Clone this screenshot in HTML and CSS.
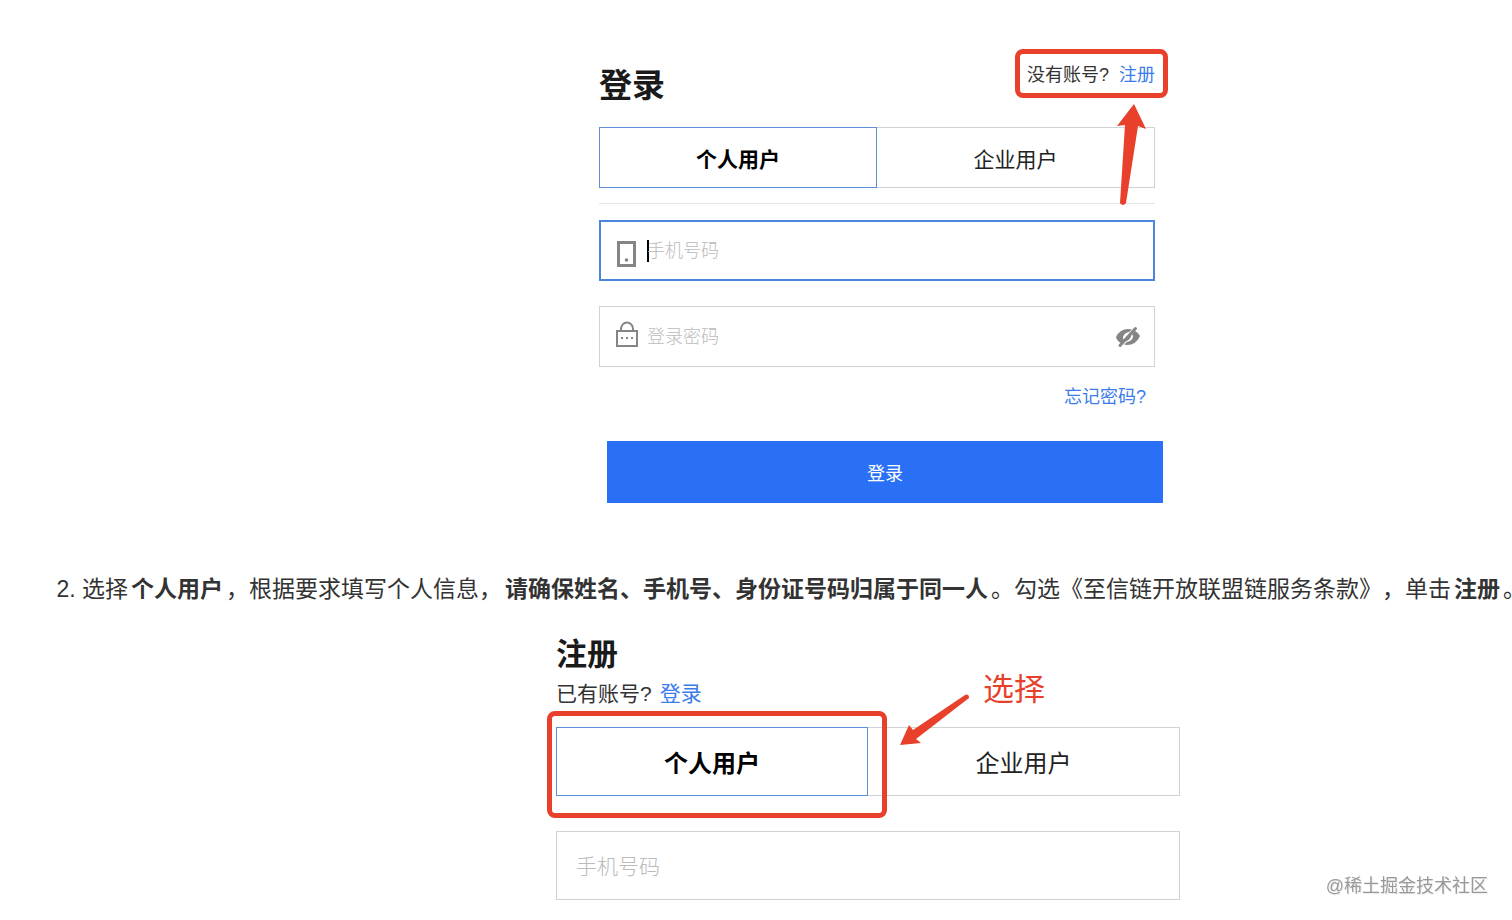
FILE: index.html
```html
<!DOCTYPE html>
<html lang="zh-CN">

<head>
    <meta charset="UTF-8">
    <meta name="viewport" content="width=device-width, initial-scale=1.0">
    <title>注册账号</title>
    <link rel="stylesheet" href="styles.css">
</head>

<body>
    <article>
        <section class="shot shot-login" id="login">
            <form class="panel login">
                <header class="login-head">
                    <h2>登录</h2>
                    <p class="switch">没有账号?<a href="#register">注册</a>
                        <span class="mark mark-link"></span>
                        <svg class="arrow arrow-up" width="32" height="104" viewBox="0 0 32 104">
                            <path d="M18 2 L30 27 L22 24 L10 101 Q7 105 4 101 L9 23 L1 24 Z" />
                        </svg>
                    </p>
                </header>
                <div class="tabs">
                    <button type="button" class="active">个人用户</button>
                    <button type="button">企业用户</button>
                </div>
                <hr>
                <div class="field focused">
                    <svg class="icon icon-phone" width="22" height="26" viewBox="0 0 22 26">
                        <rect x="2.500" y="1.500" width="16" height="23" fill="none" stroke="#858585" stroke-width="3" />
                        <circle cx="10.500" cy="19" r="1.800" fill="#858585" />
                    </svg>
                    <span class="caret"></span>
                    <input type="text" placeholder="手机号码" aria-label="手机号码">
                </div>
                <div class="field">
                    <svg class="icon icon-lock" width="22" height="26" viewBox="0 0 22 26">
                        <path d="M5 10 V8 a6 6.500 0 0 1 12 0 V10" fill="none" stroke="#858585" stroke-width="2" />
                        <rect x="1" y="10" width="20" height="15" fill="none" stroke="#858585" stroke-width="2" />
                        <path d="M5 17h2M10 17h2M15 17h2" stroke="#858585" stroke-width="2" />
                    </svg>
                    <input type="password" placeholder="登录密码" aria-label="登录密码">
                    <button type="button" class="eye" aria-label="显示密码">
                        <svg width="26" height="22" viewBox="0 0 26 22">
                            <path d="M1 11 Q5 3 13 3 L17 3.500 L14 6 Q9 7 8 11 Q8 13 9 14 L6 17 Q2 15 1 11 Z M25 10 Q21 19 12 19 L9 18.500 L12 16 Q17 15 18 11 Q18 9 17 8 L20 5 Q24 7 25 10 Z" fill="#858585" />
                            <path d="M15.500 8 Q15 13 10.500 14.500" fill="none" stroke="#858585" stroke-width="2" />
                            <path d="M5 19.500 L20.500 2.500" stroke="#858585" stroke-width="3" stroke-linecap="round" />
                        </svg>
                    </button>
                </div>
                <p class="forgot"><a href="#forgot">忘记密码?</a></p>
                <button type="submit" class="submit">登录</button>
            </form>
        </section>

        <ol start="2">
            <li>选择<strong>个人用户</strong>，根据要求填写个人信息，<strong>请确保姓名、手机号、身份证号码归属于同一人</strong>。勾选《至信链开放联盟链服务条款》，单击<strong>注册</strong>。</li>
        </ol>

        <section class="shot shot-register" id="register">
            <form class="panel register">
                <h2>注册</h2>
                <p class="switch">已有账号?<a href="#login">登录</a></p>
                <div class="tabs">
                    <button type="button" class="active">个人用户</button>
                    <button type="button">企业用户</button>
                    <span class="mark mark-tab"></span>
                    <svg class="arrow arrow-left" width="72" height="54" viewBox="0 0 72 54">
                        <path d="M1 52 L10 32 L14 37 L66 2 Q70 0 70 5 L17 46 L22 50 Z" />
                    </svg>
                    <span class="note">选择</span>
                </div>
                <div class="field">
                    <input type="text" placeholder="手机号码" aria-label="注册手机号码">
                </div>
            </form>
        </section>
    </article>

    <div class="watermark">@稀土掘金技术社区</div>
</body>

</html>
```
FILE: styles.css
```css
* {
    box-sizing: border-box;
}

body {
    margin: 0;
    background-color: #fff;
    color: #333;
    font-family: "Liberation Sans", "Noto Sans CJK SC", sans-serif;
    text-spacing-trim: space-all;
    overflow-x: hidden;
}

h2,
p {
    margin: 0;
}

h2 {
    color: #1a1a1a;
    font-weight: bold;
}

a {
    color: #3b7cec;
    text-decoration: none;
}

button,
input {
    font-family: inherit;
    font-size: inherit;
}

.shot {
    display: flex;
    justify-content: center;
}

.shot-login {
    padding: 62px 0 0 242px;
}

.shot-register {
    padding: 28px 0 20px 224px;
}

.panel {
    width: 100%;
}

.login {
    max-width: 556px;
    font-size: 18px;
}

.register {
    max-width: 624px;
    font-size: 21px;
}

.login-head {
    display: flex;
    justify-content: space-between;
    align-items: flex-start;
    margin-bottom: 17px;
}

.login h2 {
    font-size: 33px;
    line-height: 48px;
}

.register h2 {
    font-size: 31px;
    line-height: 40px;
}

.switch {
    position: relative;
    z-index: 1;
    line-height: 26px;
}

.switch a {
    margin-left: 10px;
}

.register .switch {
    margin: 4px 0 18px;
    line-height: 30px;
}

.register .switch a {
    margin-left: 8px;
}

/* tabs */
.tabs {
    position: relative;
    display: flex;
}

.tabs button {
    flex: 1 1 50%;
    height: 61px;
    padding: 0;
    background: none;
    border: 1px solid #d0d3d6;
    border-left: none;
    color: #222;
    font-size: 21px;
    cursor: pointer;
}

.tabs .active {
    border: 1px solid #5f8fd8;
    color: #000;
    font-weight: bold;
}

.register .tabs {
    margin-bottom: 35px;
}

.register .tabs button {
    height: 69px;
    font-size: 24px;
}

hr {
    height: 1px;
    margin: 15px 0 16px;
    border: none;
    background-color: #e4e7ea;
}

/* inputs */
.field {
    display: flex;
    align-items: center;
    height: 61px;
    margin-bottom: 25px;
    padding: 0 13px 0 16px;
    border: 1px solid #d0d3d6;
}

.field.focused {
    padding: 0 12px 0 15px;
    border: 2px solid #4c86dc;
}

.field input {
    flex: 1;
    min-width: 0;
    height: 100%;
    padding: 2px 0 0;
    border: none;
    outline: none;
    background: none;
    color: #333;
}

.field input::placeholder {
    color: #bbb;
    font-weight: 300;
}

.icon {
    flex: none;
    margin-right: 9px;
}

.icon-phone {
    margin-top: 6px;
}

.icon-lock {
    margin-bottom: 6px;
}

.caret {
    width: 2px;
    height: 22px;
    margin-right: -2px;
    background-color: #000;
}

.eye {
    display: flex;
    padding: 0;
    border: none;
    background: none;
    cursor: pointer;
}

.login .field:nth-of-type(3) {
    margin-bottom: 18px;
}

.register .field {
    height: 69px;
    margin-bottom: 0;
    padding: 0 19px;
}

.forgot {
    padding-right: 9px;
    line-height: 24px;
    text-align: right;
}

.submit {
    display: block;
    width: 100%;
    height: 62px;
    margin: 32px 0 0 8px;
    border: none;
    background-color: #2970f6;
    color: #fff;
    cursor: pointer;
}

/* step text */
ol {
    margin: 68px 0 0;
    padding-left: 82px;
    font-size: 23px;
    line-height: 36px;
    white-space: nowrap;
}

strong {
    margin: 0 3px;
}

/* red annotations */
.mark {
    position: absolute;
    border: 5px solid #e8402a;
    border-radius: 8px;
    pointer-events: none;
}

.mark-link {
    top: -13px;
    right: -13px;
    bottom: -10px;
    left: -12px;
}

.mark-tab {
    top: -16px;
    right: 293px;
    bottom: -22px;
    left: -9px;
}

.arrow {
    position: absolute;
    fill: #e8402a;
    pointer-events: none;
}

.arrow-up {
    top: 40px;
    right: 7px;
}

.arrow-left {
    top: -34px;
    right: 209px;
}

.note {
    position: absolute;
    top: -57px;
    right: 135px;
    color: #e8402a;
    font-size: 31px;
    line-height: 40px;
}

.watermark {
    position: fixed;
    right: 24px;
    bottom: 21px;
    color: #999;
    font-size: 18px;
    line-height: 26px;
    text-shadow: 1px 1px 0 #eee;
}
```
